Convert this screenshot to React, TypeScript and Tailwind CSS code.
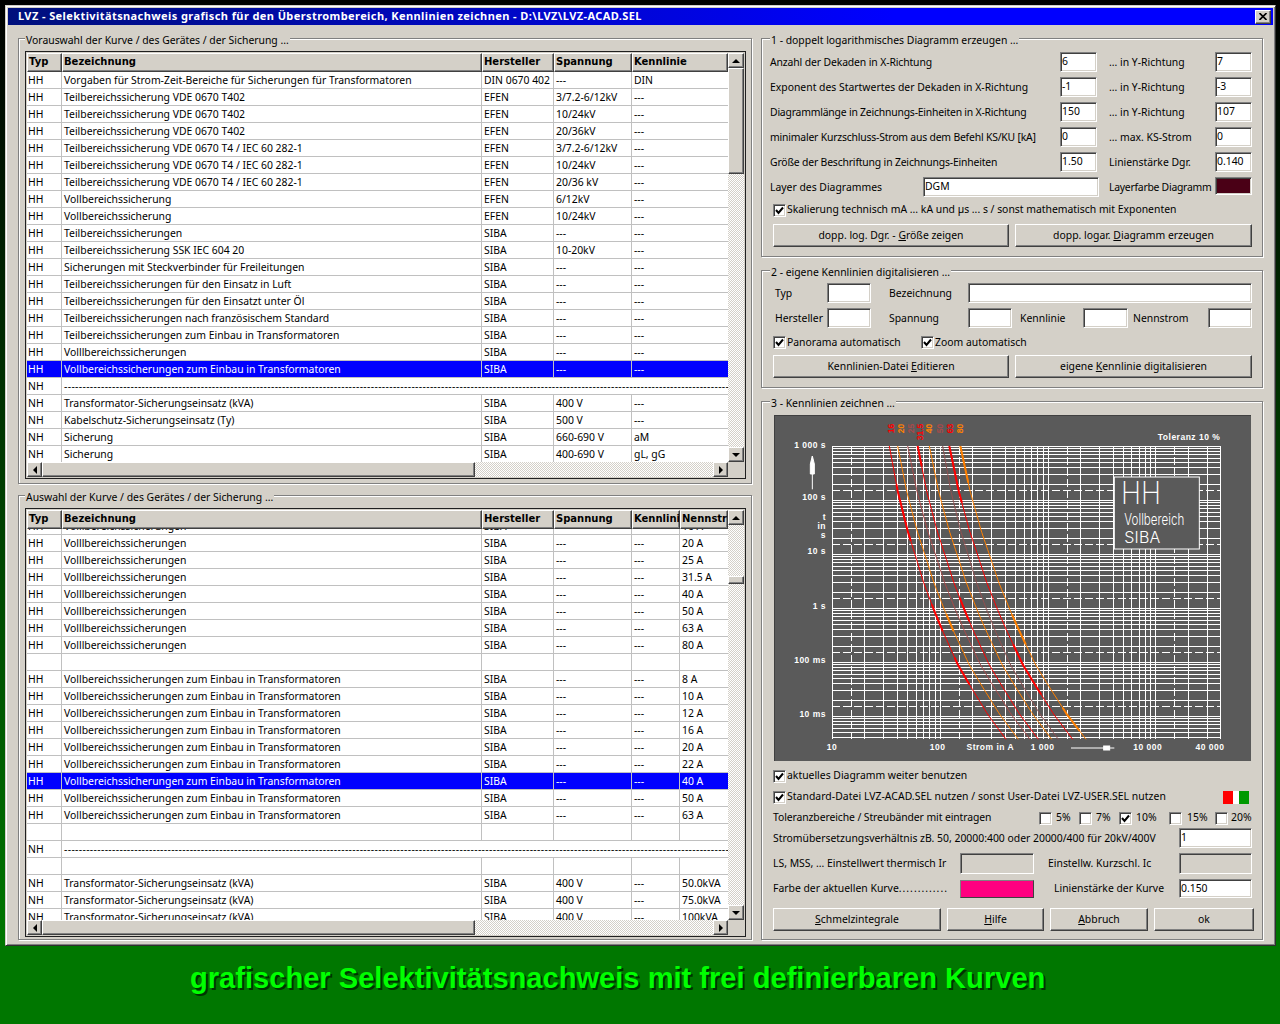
const raised = 'border border-t-white border-l-white border-r-[#404040] border-b-[#404040] shadow-[inset_-1px_-1px_0_#808080] bg-[#d4d0c8]';
const sunken = 'border border-t-[#808080] border-l-[#808080] border-r-white border-b-white shadow-[inset_1px_1px_0_#404040,inset_-1px_-1px_0_#d4d0c8]';
const dither = 'bg-[repeating-conic-gradient(#d4d0c8_0_25%,#ffffff_0_50%)] bg-size-[2px_2px]';

type Row = { c: string[]; sel?: boolean; dash?: boolean };

const vs = (d: string, h: string, k: string, s = '---') => ({ c: ['HH', d, h, s, k] });
const preselect: Row[] = [
  vs('Vorgaben für Strom-Zeit-Bereiche für Sicherungen für Transformatoren', 'DIN 0670 402', 'DIN'),
  vs('Teilbereichssicherung VDE 0670 T402', 'EFEN', '---', '3/7.2-6/12kV'),
  vs('Teilbereichssicherung VDE 0670 T402', 'EFEN', '---', '10/24kV'),
  vs('Teilbereichssicherung VDE 0670 T402', 'EFEN', '---', '20/36kV'),
  vs('Teilbereichssicherung VDE 0670 T4 / IEC 60 282-1', 'EFEN', '---', '3/7.2-6/12kV'),
  vs('Teilbereichssicherung VDE 0670 T4 / IEC 60 282-1', 'EFEN', '---', '10/24kV'),
  vs('Teilbereichssicherung VDE 0670 T4 / IEC 60 282-1', 'EFEN', '---', '20/36 kV'),
  vs('Vollbereichssicherung', 'EFEN', '---', '6/12kV'),
  vs('Vollbereichssicherung', 'EFEN', '---', '10/24kV'),
  vs('Teilbereichssicherungen', 'SIBA', '---'),
  vs('Teilbereichssicherung SSK IEC 604 20', 'SIBA', '---', '10-20kV'),
  vs('Sicherungen mit Steckverbinder für Freileitungen', 'SIBA', '---'),
  vs('Teilbereichssicherungen für den Einsatz in Luft', 'SIBA', '---'),
  vs('Teilbereichssicherungen für den Einsatzt unter Öl', 'SIBA', '---'),
  vs('Teilbereichssicherungen nach französischem Standard', 'SIBA', '---'),
  vs('Teilbereichssicherungen zum Einbau in Transformatoren', 'SIBA', '---'),
  vs('Volllbereichssicherungen', 'SIBA', '---'),
  { ...vs('Vollbereichssicherungen zum Einbau in Transformatoren', 'SIBA', '---'), sel: true },
  { c: ['NH'], dash: true },
  { c: ['NH', 'Transformator-Sicherungseinsatz (kVA)', 'SIBA', '400 V', '---'] },
  { c: ['NH', 'Kabelschutz-Sicherungseinsatz (Ty)', 'SIBA', '500 V', '---'] },
  { c: ['NH', 'Sicherung', 'SIBA', '660-690 V', 'aM'] },
  { c: ['NH', 'Sicherung', 'SIBA', '400-690 V', 'gL, gG'] },
];

const voll = (a: string): Row => ({ c: ['HH', 'Volllbereichssicherungen', 'SIBA', '---', '---', a] });
const trafo = (a: string, sel = false): Row => ({ c: ['HH', 'Vollbereichssicherungen zum Einbau in Transformatoren', 'SIBA', '---', '---', a], sel });
const nh = (a: string): Row => ({ c: ['NH', 'Transformator-Sicherungseinsatz (kVA)', 'SIBA', '400 V', '---', a] });
const empty: Row = { c: ['', '', '', '', '', ''] };
const selection: Row[] = [
  voll('16 A'), voll('20 A'), voll('25 A'), voll('31.5 A'), voll('40 A'), voll('50 A'), voll('63 A'), voll('80 A'),
  empty,
  trafo('8 A'), trafo('10 A'), trafo('12 A'), trafo('16 A'), trafo('20 A'), trafo('22 A'), trafo('40 A', true), trafo('50 A'), trafo('63 A'),
  empty,
  { c: ['NH'], dash: true },
  empty,
  nh('50.0kVA'), nh('75.0kVA'), nh('100kVA'),
];

function Arrow({ dir }: { dir: 'up' | 'down' | 'left' | 'right' }) {
  const pts = { up: '4,0 0,4 8,4', down: '0,0 8,0 4,4', left: '4,0 4,8 0,4', right: '0,0 4,4 0,8' }[dir];
  const wide = dir === 'up' || dir === 'down';
  return (
    <svg width={wide ? 8 : 4} height={wide ? 4 : 8} className="block">
      <polygon points={pts} fill="#000" />
    </svg>
  );
}

function ScrollBtn({ dir, className }: { dir: 'up' | 'down' | 'left' | 'right'; className: string }) {
  return (
    <div className={`${raised} ${className} flex shrink-0 items-center justify-center`}>
      <Arrow dir={dir} />
    </div>
  );
}

function Table({ cols, head, rows, height, offset, vThumbTop, vThumbH }: {
  cols: number[]; head: string[]; rows: Row[]; height: number; offset: number; vThumbTop: number; vThumbH: number;
}) {
  const tpl = { gridTemplateColumns: cols.map((w) => `${w}px`).join(' ') };
  return (
    <div className="ml-[6px] flex w-[721px] flex-col border border-[#202020] bg-[#d4d0c8] p-px" style={{ height }}>
      <div className="flex min-h-0 flex-1">
        <div className="flex w-[701px] flex-col">
          <div className="grid h-[19px] shrink-0" style={tpl}>
            {head.map((h) => (
              <div key={h} className={`${raised} overflow-hidden pl-px font-['DejaVu_Sans',sans-serif] text-[10px] leading-[16px] font-bold whitespace-nowrap`}>{h}</div>
            ))}
          </div>
          <div className="min-h-0 flex-1 overflow-hidden bg-white">
            <div style={{ marginTop: offset }}>
              {rows.map((r, i) => (
                <div key={i} className={`grid h-[17px] border-b border-[#c0c0c0] leading-[16px] whitespace-nowrap ${r.sel ? 'bg-[#0000ff] text-white' : ''}`} style={tpl}>
                  {r.dash ? (
                    <>
                      <div className="border-r border-[#c0c0c0] pl-[1px]">{r.c[0]}</div>
                      <div className="col-[2/-1] overflow-hidden pl-[2px] tracking-[0.35px]">{'-'.repeat(220)}</div>
                    </>
                  ) : (
                    r.c.map((t, j) => (
                      <div key={j} className={`overflow-hidden pl-[2px] ${j === 0 ? 'pl-px' : ''} ${j < r.c.length - 1 ? 'border-r border-[#c0c0c0]' : ''}`}>{t}</div>
                    ))
                  )}
                </div>
              ))}
            </div>
          </div>
        </div>
        <div className="flex w-[16px] flex-col">
          <ScrollBtn dir="up" className="h-[15px]" />
          <div className={`${dither} shrink-0`} style={{ height: vThumbTop }} />
          <div className={`${raised} shrink-0`} style={{ height: vThumbH }} />
          <div className={`${dither} flex-1`} />
          <ScrollBtn dir="down" className="h-[15px]" />
        </div>
      </div>
      <div className="flex h-[15px] shrink-0">
        <ScrollBtn dir="left" className="w-[15px]" />
        <div className={`${raised} w-[433px]`} />
        <div className={`${dither} flex-1`} />
        <ScrollBtn dir="right" className="w-[15px]" />
        <div className="w-[16px]" />
      </div>
    </div>
  );
}

function Group({ title, className, indent, children }: { title: string; className: string; indent: string; children: React.ReactNode }) {
  return (
    <div className={`${className} border border-[#808080] shadow-[inset_1px_1px_0_#fff,1px_1px_0_#fff]`}>
      <div className={`${indent} -mt-[7px] h-[15px] w-fit bg-[#d4d0c8] px-px leading-[17px]`}>{title}</div>
      {children}
    </div>
  );
}

function Input({ v = '', className, gray }: { v?: string; className: string; gray?: boolean }) {
  return <div className={`${sunken} ${className} ${gray ? 'bg-[#d4d0c8]' : 'bg-white'} shrink-0 pl-[1px] leading-[17px]`}>{v}</div>;
}

function Check({ on = true }: { on?: boolean }) {
  return (
    <div className={`${sunken} h-[13px] w-[13px] shrink-0 bg-white`}>
      {on && (
        <svg width="11" height="11" className="block">
          <path d="M2 5 L4.5 8 L9 2.5" fill="none" stroke="#000" strokeWidth="2" />
        </svg>
      )}
    </div>
  );
}

function Btn({ className, children }: { className: string; children: React.ReactNode }) {
  return <div className={`${raised} ${className} flex h-[23px] shrink-0 items-center justify-center whitespace-nowrap`}>{children}</div>;
}

function Param({ a, v, b, w, fit = '' }: { a: string; v: string; b: string; w: string; fit?: string }) {
  return (
    <div className="flex h-[25px] items-start leading-[20px] whitespace-nowrap">
      <span className={`w-[290px] ${fit}`}>{a}</span>
      <Input v={v} className="h-[20px] w-[37px]" />
      <span className="ml-[12px] w-[106px]">{b}</span>
      <Input v={w} className="h-[20px] w-[37px]" />
    </div>
  );
}

// log-log chart
const decX = 107.8;
const decY = 54;
const X0 = 57, X1 = 445, Y0 = 30, Y1 = 323;
const gx = (v: number) => Math.round(X0 + Math.log10(v / 10) * decX) + 0.5;
const gy = (t: number) => Math.round(Y0 + (3 - Math.log10(t)) * decY) + 0.5;
const vLines: number[] = [];
const hLines: number[] = [];
for (let d = 10; d <= 10000; d *= 10) for (let m = 1; m <= 9; m++) if (d * m <= 40000) vLines.push(d * m);
vLines.push(40000);
for (let d = 0.001; d <= 100; d *= 10) for (let m = 1; m <= 9; m++) if (d * m > 0.0036) hLines.push(d * m);
hLines.push(1000);

const base = [[385, 135], [410, 270], [440, 390], [465, 470], [488, 545], [520, 630], [545, 690], [590, 790], [625, 850], [680, 940], [735, 1015]];
const curves = [
  { top: 0, bottom: 0, color: '#ff0000', thick: [[250, 420], [610, 690], [770, 850]] },
  { top: 25, bottom: 37, color: '#ff8000', thick: [[640, 690]] },
  { top: 55, bottom: 72, color: '#a84a4a', thick: [] },
  { top: 85, bottom: 97, color: '#ff0000', thick: [[135, 200], [590, 660]] },
  { top: 120, bottom: 137, color: '#ff8000', thick: [] },
  { top: 160, bottom: 157, color: '#905050', thick: [] },
  { top: 180, bottom: 200, color: '#ff0000', thick: [[135, 310], [730, 880]] },
  { top: 213, bottom: 240, color: '#ff8000', thick: [[135, 250], [640, 730], [920, 990]] },
];
const tx = (z: number) => z / 3 - 14;
const ty = (z: number) => z / 3 - 15;
const xAt = (y: number) => {
  for (let i = 1; i < base.length; i++) {
    if (y <= base[i][1]) {
      const [x0, y0] = base[i - 1];
      const [x1, y1] = base[i];
      return x0 + ((x1 - x0) * (y - y0)) / (y1 - y0);
    }
  }
  return 735;
};
const curvePts = (top: number, bottom: number, y0 = 135, y1 = 1015) => {
  const out: string[] = [];
  for (let y = y0; y <= y1; y += 10) out.push(`${tx(xAt(y) + top + ((bottom - top) * (y - 135)) / 880)},${ty(y)}`);
  return out.join(' ');
};

const topLabels: [string, number, string][] = [['16', 390, '#ff0000'], ['20', 420, '#ff8000'], ['25', 450, '#a84a4a'], ['31.5', 477, '#ff0000'], ['40', 505, '#ff8000'], ['50', 537, '#a84a4a'], ['63', 567, '#ff0000'], ['80', 598, '#ff8000']];
const sideLabels: [string, number][] = [['1 000 s', 135], ['100 s', 291], ['t', 350], ['in', 378], ['s', 405], ['10 s', 454], ['1 s', 619], ['100 ms', 780], ['10 ms', 942]];
const bottomLabels: [string, number][] = [['10', 213], ['100', 530], ['Strom in A', 688], ['1 000', 845], ['10 000', 1160], ['40 000', 1347]];

function Chart() {
  return (
    <svg width="477" height="346" className="ml-[4px] block border-t border-l border-[#404040] bg-[#5a5a5a]">
      <g shapeRendering="crispEdges" stroke="#fff" strokeWidth="1">
        {vLines.map((v) => <line key={v} x1={gx(v)} x2={gx(v)} y1={Y0} y2={Y1} />)}
        {hLines.map((t) => <line key={t} x1={X0} x2={X1} y1={gy(t)} y2={gy(t)} />)}
        {[15, 150, 1500, 15000].map((v) => <line key={v} x1={gx(v)} x2={gx(v)} y1={Y0} y2={Y1} strokeDasharray="8 3" />)}
        {[150, 15, 1.5, 0.15, 0.015].map((t) => <line key={t} x1={X0} x2={X1} y1={gy(t)} y2={gy(t)} stroke="#fff" strokeDasharray="8 3" />)}
      </g>
      {curves.map((c, i) => (
        <g key={i} fill="none" stroke={c.color}>
          <polyline points={curvePts(c.top, c.bottom)} strokeWidth="1" />
          {c.thick.map(([a, b]) => <polyline key={a} points={curvePts(c.top, c.bottom, a, b)} strokeWidth="2" />)}
        </g>
      ))}
      <g fontFamily="'Liberation Sans',sans-serif" fontSize="8.5" fontWeight="700">
        {topLabels.map(([t, x, col]) => (
          <text key={t} transform={`translate(${tx(x) + 3},${ty(68)}) rotate(-90)`} textAnchor="end" fill={col}>{t}</text>
        ))}
        <g fill="#fff" letterSpacing="0.5">
          <text x={tx(1378)} y={ty(116)} textAnchor="end">Toleranz 10 %</text>
          {sideLabels.map(([t, y]) => <text key={t} x={tx(195)} y={ty(y) + 2} textAnchor="end">{t}</text>)}
          {bottomLabels.map(([t, x]) => <text key={t} x={tx(x)} y={ty(1041) + 2} textAnchor="middle">{t}</text>)}
        </g>
      </g>
      <g fill="#fff" stroke="#fff">
        <line x1={tx(154)} x2={tx(154)} y1={ty(165)} y2={ty(265)} />
        <path d={`M${tx(154)} ${ty(165)} l-2 8 v10 h4 v-10 z`} />
        <line x1={tx(930)} x2={tx(1060)} y1={ty(1041)} y2={ty(1041)} />
        <rect x={tx(1028)} y={ty(1041) - 2} width="6" height="4" />
      </g>
      <rect x={tx(1060)} y={ty(228)} width="85" height="72" fill="#5a5a5a" stroke="#fff" />
      <g fill="#fff" fontFamily="'Inter',sans-serif">
        <text x={tx(1080)} y={ty(310)} fontSize="31" fontWeight="200" textLength="40" lengthAdjust="spacingAndGlyphs">HH</text>
        <text x={tx(1090)} y={ty(372)} fontSize="16" fontWeight="300" textLength="60" lengthAdjust="spacingAndGlyphs">Vollbereich</text>
        <text x={tx(1090)} y={ty(425)} fontSize="16" fontWeight="300" textLength="36">SIBA</text>
      </g>
    </svg>
  );
}

export default function App() {
  return (
    <div className="h-[1024px] w-[1280px] overflow-hidden bg-[linear-gradient(#000000_0,#007700_950px)] pt-[5px] pl-[5px] font-['Noto_Sans','Liberation_Sans',sans-serif] text-[10.4px] text-black">
      {/* Dialog */}
      <div className="h-[941px] w-[1271px] border border-t-[#d4d0c8] border-r-[#303030] border-b-[#303030] border-l-[#d4d0c8] bg-[#d4d0c8] p-[2px] shadow-[inset_1px_1px_0_#fff,inset_-1px_-1px_0_#808080]">
        <div className="flex h-[17px] items-center justify-between bg-[linear-gradient(90deg,#00107c,#0000ff_70%)] pr-[2px] pl-[10px]">
          <span className="text-[11px] font-bold tracking-[0.41px] text-white">LVZ - Selektivitätsnachweis grafisch für den Überstrombereich, Kennlinien zeichnen - D:\LVZ\LVZ-ACAD.SEL</span>
          <div className={`${raised} flex h-[14px] w-[16px] items-center justify-center`}>
            <svg width="8" height="7"><path d="M0.5 0 L7.5 7 M7.5 0 L0.5 7" stroke="#000" strokeWidth="1.6" /></svg>
          </div>
        </div>

        <div className="flex pt-[13px] pl-[10px]">
          {/* Left column */}
          <div className="flex w-[734px] flex-col gap-[11px]">
            <Group title="Vorauswahl der Kurve / des Gerätes / der Sicherung ..." className="h-[446px]" indent="ml-[6px]">
              <div className="h-[4px]" />
              <Table
                cols={[35, 420, 72, 78, 96]}
                head={['Typ', 'Bezeichnung', 'Hersteller', 'Spannung', 'Kennlinie']}
                rows={preselect}
                height={428}
                offset={0}
                vThumbTop={0}
                vThumbH={106}
              />
            </Group>
            <Group title="Auswahl der Kurve / des Gerätes / der Sicherung ..." className="h-[445px]" indent="ml-[6px]">
              <div className="h-[4px]" />
              <Table
                cols={[35, 420, 72, 78, 48, 48]}
                head={['Typ', 'Bezeichnung', 'Hersteller', 'Spannung', 'Kennlinie', 'Nennstrom']}
                rows={selection}
                height={429}
                offset={-11}
                vThumbTop={51}
                vThumbH={8}
              />
            </Group>
          </div>

          {/* Right column */}
          <div className="ml-[9px] flex w-[502px] flex-col">
            <Group title="1 - doppelt logarithmisches Diagramm erzeugen ..." className="h-[219px] pl-[8px]" indent="">
              <div className="h-[5px]" />
              <Param a="Anzahl der Dekaden in X-Richtung" v="6" b="... in Y-Richtung" w="7" fit="tracking-[-0.12px]" />
              <Param a="Exponent des Startwertes der Dekaden in X-Richtung" v="-1" b="... in Y-Richtung" w="-3" />
              <Param a="Diagrammlänge in Zeichnungs-Einheiten in X-Richtung" v="150" b="... in Y-Richtung" w="107" fit="tracking-[-0.2px]" />
              <Param a="minimaler Kurzschluss-Strom aus dem Befehl KS/KU [kA]" v="0" b="... max. KS-Strom" w="0" fit="tracking-[-0.19px]" />
              <Param a="Größe der Beschriftung in Zeichnungs-Einheiten" v="1.50" b="Linienstärke Dgr." w="0.140" fit="tracking-[-0.17px]" />
              <div className="flex h-[25px] items-start leading-[20px] whitespace-nowrap">
                <span className="w-[153px]">Layer des Diagrammes</span>
                <Input v="DGM" className="h-[20px] w-[176px]" />
                <span className="ml-[10px] w-[106px] tracking-[-0.25px]">Layerfarbe Diagramm</span>
                <div className={`${sunken} h-[18px] w-[37px] bg-[#4a0016]`} />
              </div>
              <div className="ml-[3px] flex h-[16px] items-center gap-px">
                <Check />
                <span>Skalierung technisch mA ... kA und µs ... s / sonst mathematisch mit Exponenten</span>
              </div>
              <div className="mt-[6px] ml-[3px] flex gap-[6px]">
                <Btn className="w-[236px]"><span>dopp. log. Dgr. - <u>G</u>röße zeigen</span></Btn>
                <Btn className="w-[237px]"><span>dopp. logar. <u>D</u>iagramm erzeugen</span></Btn>
              </div>
            </Group>

            <Group title="2 - eigene Kennlinien digitalisieren ..." className="mt-[13px] h-[118px] pl-[8px]" indent="">
              <div className="h-[4px]" />
              <div className="flex h-[25px] items-start leading-[20px]">
                <span className="ml-[5px] w-[52px]">Typ</span>
                <Input className="h-[20px] w-[44px]" />
                <span className="ml-[18px] w-[79px]">Bezeichnung</span>
                <Input className="h-[20px] w-[284px]" />
              </div>
              <div className="flex h-[25px] items-start leading-[20px]">
                <span className="ml-[5px] w-[52px]">Hersteller</span>
                <Input className="h-[20px] w-[44px]" />
                <span className="ml-[18px] w-[79px]">Spannung</span>
                <Input className="h-[20px] w-[44px]" />
                <span className="ml-[8px] w-[63px]">Kennlinie</span>
                <Input className="h-[20px] w-[45px]" />
                <span className="ml-[5px] w-[75px]">Nennstrom</span>
                <Input className="h-[20px] w-[44px]" />
              </div>
              <div className="ml-[3px] flex h-[19px] items-center">
                <div className="flex w-[148px] items-center gap-px"><Check /><span>Panorama automatisch</span></div>
                <div className="flex items-center gap-px"><Check /><span>Zoom automatisch</span></div>
              </div>
              <div className="mt-[3px] ml-[3px] flex gap-[6px]">
                <Btn className="w-[236px]"><span>Kennlinien-Datei <u>E</u>ditieren</span></Btn>
                <Btn className="w-[237px]"><span>eigene <u>K</u>ennlinie digitalisieren</span></Btn>
              </div>
            </Group>

            <Group title="3 - Kennlinien zeichnen ..." className="mt-[13px] h-[539px] pl-[8px]" indent="">
              <div className="h-[5px]" />
              <Chart />
              <div className="mt-[5px] ml-[3px] flex h-[20px] items-center gap-px"><Check /><span>aktuelles Diagramm weiter benutzen</span></div>
              <div className="mt-px ml-[3px] flex h-[20px] items-center gap-px">
                <Check />
                <span className="w-[435px] tracking-[0.05px]">Standard-Datei LVZ-ACAD.SEL nutzen / sonst User-Datei LVZ-USER.SEL nutzen</span>
                <div className="flex h-[13px]">
                  <div className="w-[10px] bg-[#ff0000]" />
                  <div className="w-[6px] bg-white" />
                  <div className="w-[10px] bg-[#009900]" />
                </div>
              </div>
              <div className="mt-px ml-[3px] flex h-[20px] items-center">
                <span className="w-[266px] tracking-[-0.09px]">Toleranzbereiche / Streubänder mit eintragen</span>
                <Check on={false} /><span className="ml-[4px] w-[23px]">5%</span>
                <Check on={false} /><span className="ml-[4px] w-[23px]">7%</span>
                <Check /><span className="ml-[4px] w-[33px]">10%</span>
                <Check on={false} /><span className="ml-[5px] w-[28px]">15%</span>
                <Check on={false} /><span className="ml-[3px]">20%</span>
              </div>
              <div className="ml-[3px] flex h-[20px] items-start leading-[20px]">
                <span className="w-[406px]">Stromübersetzungsverhältnis zB. 50, 20000:400 oder 20000/400 für 20kV/400V</span>
                <Input v="1" className="h-[20px] w-[73px]" />
              </div>
              <div className="mt-[5px] ml-[3px] flex h-[21px] items-center">
                <span className="w-[187px]">LS, MSS, ... Einstellwert thermisch Ir</span>
                <Input gray className="h-[21px] w-[74px]" />
                <span className="ml-[14px] w-[131px]">Einstellw. Kurzschl. Ic</span>
                <Input gray className="h-[21px] w-[73px]" />
              </div>
              <div className="mt-[5px] ml-[3px] flex h-[19px] items-center">
                <span className="w-[187px] whitespace-nowrap">Farbe der aktuellen Kurve<span className="tracking-[1px]">.............</span></span>
                <div className="h-[18px] w-[74px] border border-t-[#808080] border-r-[#404040] border-b-[#404040] border-l-[#808080] bg-[#ff0080]" />
                <span className="ml-[20px] w-[125px]">Linienstärke der Kurve</span>
                <Input v="0.150" className="h-[19px] w-[73px]" />
              </div>
              <div className="mt-[10px] ml-[3px] flex gap-[6px]">
                <Btn className="w-[168px]"><span><u>S</u>chmelzintegrale</span></Btn>
                <Btn className="w-[97px]"><span><u>H</u>ilfe</span></Btn>
                <Btn className="w-[98px]"><span><u>A</u>bbruch</span></Btn>
                <Btn className="w-[100px]"><span>ok</span></Btn>
              </div>
            </Group>
          </div>
        </div>
      </div>

      {/* Caption */}
      <div className="pt-[14px] pl-[185px] font-['Liberation_Sans',sans-serif] text-[29.1px] leading-[36px] font-bold whitespace-nowrap text-[#00ff00] [text-shadow:2px_2px_0_#003300]">
        grafischer Selektivitätsnachweis mit frei definierbaren Kurven
      </div>
    </div>
  );
}
